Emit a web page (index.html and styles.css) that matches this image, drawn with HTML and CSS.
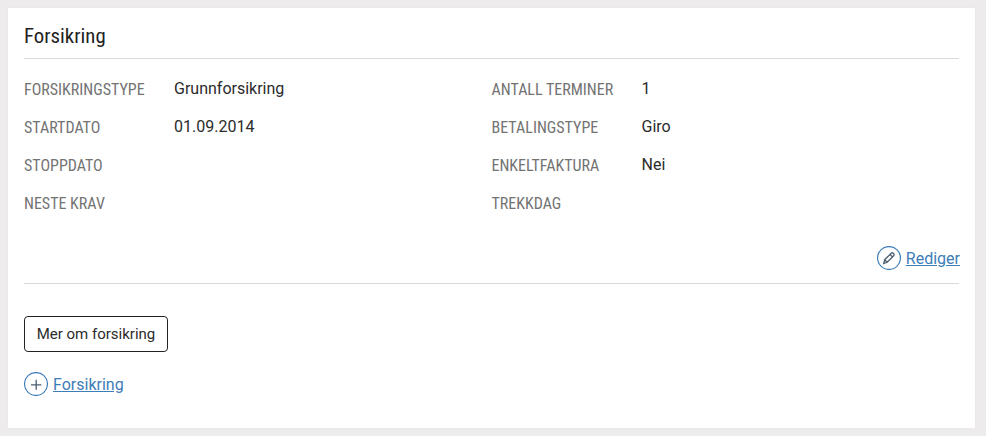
FILE: index.html
```html
<!DOCTYPE html>
<html lang="no">
<head>
<meta charset="utf-8">
<title>Forsikring</title>
<link rel="stylesheet" href="styles.css">
</head>
<body>
<main class="card">
  <h1 class="title">Forsikring</h1>
  <div class="columns">
    <dl class="list">
      <div class="row"><dt>FORSIKRINGSTYPE</dt><dd>Grunnforsikring</dd></div>
      <div class="row"><dt>STARTDATO</dt><dd>01.09.2014</dd></div>
      <div class="row"><dt>STOPPDATO</dt><dd></dd></div>
      <div class="row"><dt>NESTE KRAV</dt><dd></dd></div>
    </dl>
    <dl class="list">
      <div class="row"><dt>ANTALL TERMINER</dt><dd>1</dd></div>
      <div class="row"><dt>BETALINGSTYPE</dt><dd>Giro</dd></div>
      <div class="row"><dt>ENKELTFAKTURA</dt><dd>Nei</dd></div>
      <div class="row"><dt>TREKKDAG</dt><dd></dd></div>
    </dl>
  </div>
  <div class="actions">
    <a class="action" href="#">
      <svg class="icon" viewBox="0 0 24 24"><circle cx="12" cy="12" r="11.45"/><path class="glyph" d="M6.7 17.5l1-3.8 6.5-6.4c.6-.6 1.4-.6 2 0l.5.5c.6.6.6 1.4 0 2l-6.5 6.5zM13 8.4l2.6 2.6M7.7 13.7l2.5 2.6"/></svg>
      <span class="label">Rediger</span>
    </a>
  </div>
  <button class="button" type="button">Mer om forsikring</button>
  <a class="action" href="#">
    <svg class="icon" viewBox="0 0 24 24"><circle cx="12" cy="12" r="11.45"/><path class="glyph" d="M7 12.8h10.4M12.2 7.8v10"/></svg>
    <span class="label">Forsikring</span>
  </a>
</main>
</body>
</html>
```
FILE: styles.css
```css
* { box-sizing: border-box; }
body {
  margin: 0;
  padding: 8px 11px 8px 8px;
  height: 436px;
  background: #edebeb;
  color: #2b2b2b;
  font: 16px/24px Roboto, sans-serif;
}
.card {
  height: 420px;
  padding: 13px 16px;
  background: #fff;
  box-shadow: 0 0 4px rgba(0, 0, 0, 0.03);
}
.title {
  margin: 0;
  height: 38px;
  border-bottom: 1px solid #dadada;
  color: #222;
  font: 400 20.8px/30px "Roboto Condensed", Roboto, sans-serif;
}
.columns {
  display: grid;
  grid-template-columns: 1fr 1fr;
  padding-top: 18px;
}
.list { margin: 0; }
.row { display: flex; height: 38px; }
dt {
  width: 150px;
  padding-top: 1px;
  color: #737373;
  font-family: "Roboto Condensed", Roboto, sans-serif;
  white-space: nowrap;
}
dd { margin: 0; }
.actions {
  display: flex;
  justify-content: flex-end;
  height: 55px;
  padding-top: 17px;
  margin-bottom: 32px;
  border-bottom: 1px solid #dadada;
}
.actions .action { margin-right: -1px; }
.action {
  display: flex;
  gap: 5px;
  height: 24px;
  color: #3d7db8;
}
.label { padding-top: 1px; }
.icon { width: 24px; height: 24px; fill: none; stroke: #3d7db8; stroke-width: 1.2; }
.glyph { stroke: #4b5e70; stroke-width: 1.3; }
.button {
  display: block;
  width: 144px;
  height: 36px;
  margin-bottom: 20px;
  padding: 0;
  border: 1px solid #222;
  border-radius: 4px;
  background: #fff;
  color: #2b2b2b;
  font: 15px/20px Roboto, sans-serif;
}
```
